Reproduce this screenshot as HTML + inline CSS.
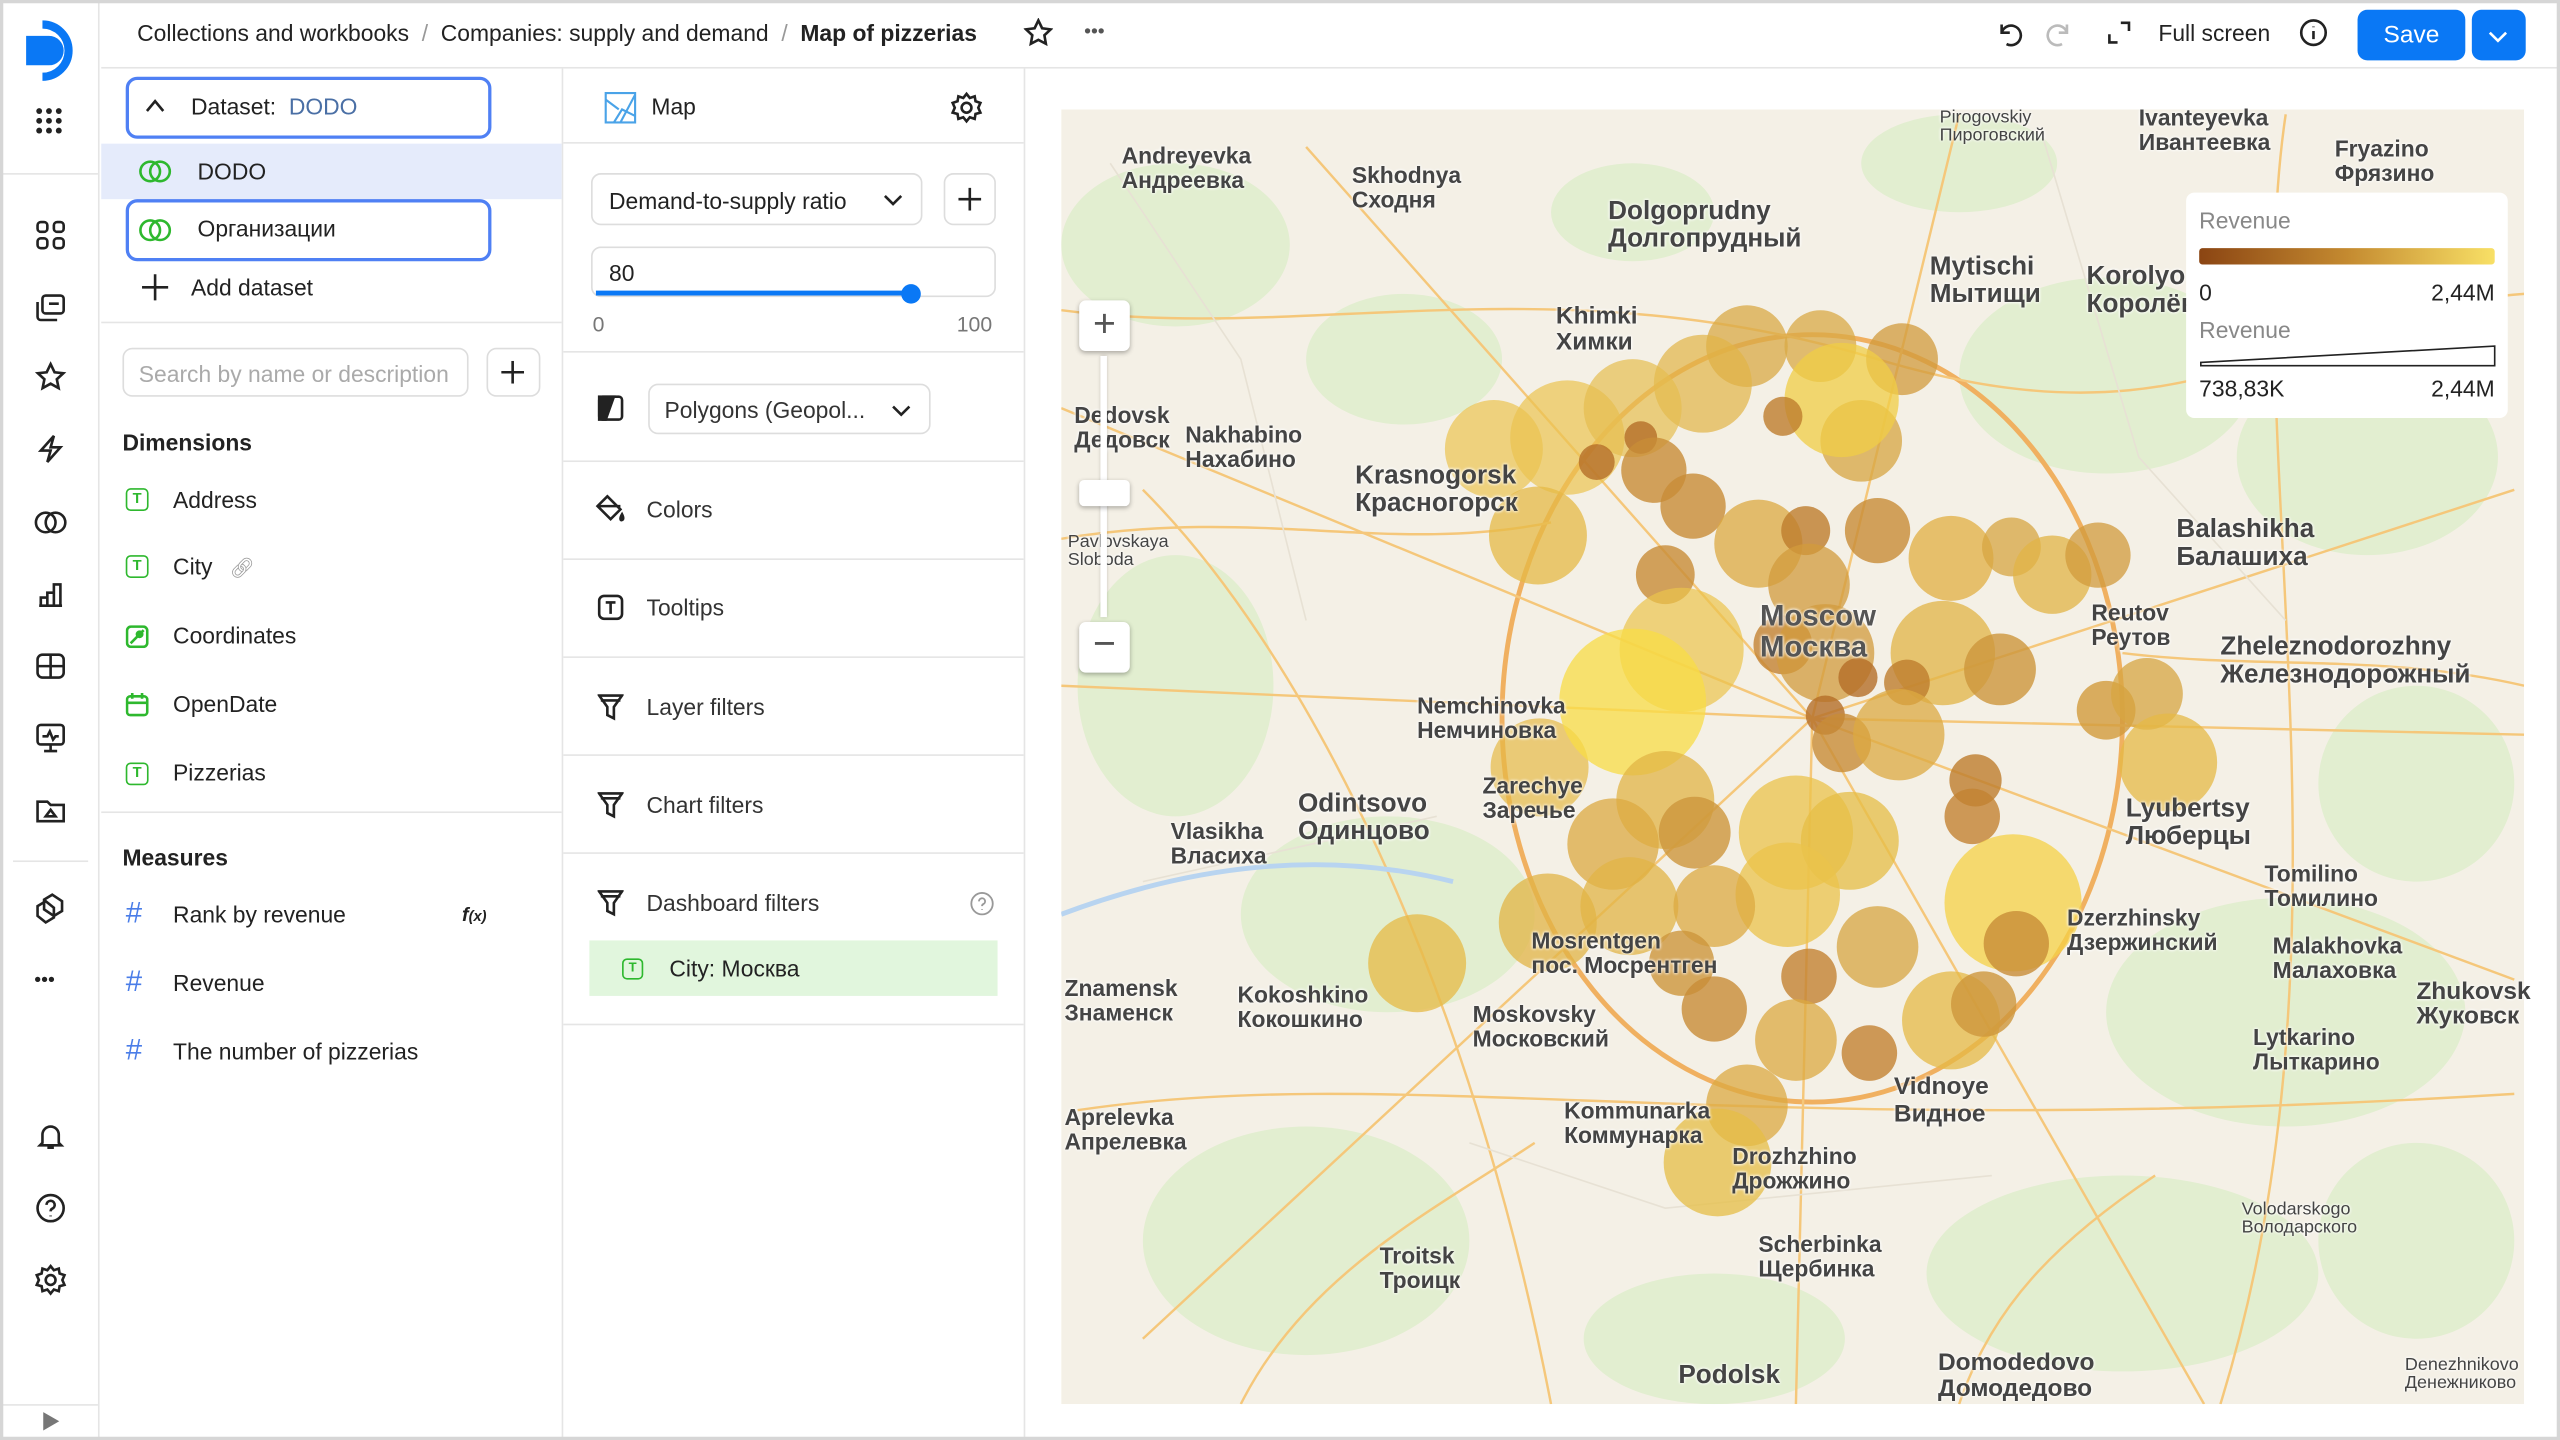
<!DOCTYPE html>
<html><head><meta charset="utf-8">
<style>
*{box-sizing:border-box;margin:0;padding:0}
html,body{width:2560px;height:1440px;overflow:hidden;background:#fff}
#w{position:absolute;left:0;top:0;width:1568px;height:882px;transform:scale(1.632653);transform-origin:0 0;font-family:"Liberation Sans","Noto Sans CJK SC",sans-serif;color:#222;font-size:14px;overflow:hidden}
#fr{position:absolute;left:0;top:0;width:1568px;height:882px;border:2px solid #d6d6d6;pointer-events:none;z-index:10}
.a{position:absolute}
.ic{position:absolute;stroke:#222;fill:none;stroke-width:1.6}
.sep{position:absolute;height:1px;background:#e5e5e5}
.t{position:absolute;width:14px;height:14px;border:1.6px solid #2eb82e;border-radius:3px;color:#2eb82e;font-size:9px;font-weight:bold;text-align:center;line-height:11px}
.hash{position:absolute;color:#4a7de8;font-size:18px}
.sec{position:absolute;left:396px;font-size:14px;color:#333}
.lbl{position:absolute;font-family:"Liberation Sans",sans-serif;font-weight:bold;color:#444;font-size:14px;line-height:15px;text-shadow:0 0 2px #fff,0 0 2px #fff}
.sm{font-size:11px;font-weight:normal;line-height:11px}
</style></head><body><div id="w">
<div id="fr"></div>
<!-- top bar -->
<div class="sep" style="left:62px;top:41px;width:1506px"></div>
<div class="a" style="left:84px;top:12px;font-size:14px">Collections and workbooks <span style="color:#999">&nbsp;/&nbsp;</span> Companies: supply and demand <span style="color:#999">&nbsp;/&nbsp;</span> <b style="font-weight:600">Map of pizzerias</b></div>
<svg class="ic" style="left:627px;top:11px" width="18" height="18" viewBox="0 0 18 18"><path d="M9 1.5l2.3 4.8 5.2.7-3.8 3.6.9 5.2L9 13.4l-4.6 2.4.9-5.2L1.5 7l5.2-.7z"/></svg>
<div class="a" style="left:664px;top:12px;font-size:12px;letter-spacing:0px;color:#555">•••</div>
<svg class="ic" style="left:1222px;top:12px" width="18" height="18" viewBox="0 0 18 18"><path d="M4 3v5h5M4 8a6 6 0 1 1 3 7"/></svg>
<svg class="ic" style="left:1252px;top:12px;stroke:#bbb" width="18" height="18" viewBox="0 0 18 18"><path d="M14 3v5H9M14 8a6 6 0 1 0-3 7"/></svg>
<svg class="ic" style="left:1290px;top:12px" width="16" height="16" viewBox="0 0 16 16"><path d="M2 9v5h5M9 2h5v5"/></svg>
<div class="a" style="left:1322px;top:12px">Full screen</div>
<svg class="ic" style="left:1408px;top:11px" width="18" height="18" viewBox="0 0 18 18"><circle cx="9" cy="9" r="7.5"/><path d="M9 8v5M9 5.2v.5"/></svg>
<div class="a" style="left:1444px;top:6px;width:66px;height:31px;background:#0a78f5;border-radius:6px;color:#fff;text-align:center;line-height:31px;font-size:15px">Save</div>
<div class="a" style="left:1514px;top:6px;width:33px;height:31px;background:#0a78f5;border-radius:6px"></div>
<svg class="ic" style="left:1522px;top:14px;stroke:#fff" width="16" height="16" viewBox="0 0 16 16"><path d="M3 6l5 5 5-5"/></svg>
<!-- left nav -->
<div class="sep" style="left:60px;top:0;width:1px;height:882px"></div>
<svg class="a" style="left:12px;top:12px" width="38" height="38" viewBox="0 0 38 38"><path d="M4 10h14a9 9 0 0 1 0 18H4z" fill="#0a78f5"/><path d="M14 3a16 16 0 0 1 0 32" fill="none" stroke="#0a78f5" stroke-width="5"/></svg>
<svg class="a" style="left:22px;top:66px" width="16" height="16" viewBox="0 0 16 16" fill="#222"><circle cx="2" cy="2" r="1.8"/><circle cx="8" cy="2" r="1.8"/><circle cx="14" cy="2" r="1.8"/><circle cx="2" cy="8" r="1.8"/><circle cx="8" cy="8" r="1.8"/><circle cx="14" cy="8" r="1.8"/><circle cx="2" cy="14" r="1.8"/><circle cx="8" cy="14" r="1.8"/><circle cx="14" cy="14" r="1.8"/></svg>
<div class="sep" style="left:0;top:106px;width:60px"></div>
<svg class="ic" style="left:21px;top:134px" width="20" height="20" viewBox="0 0 20 20"><rect x="2" y="2" width="6" height="6" rx="2"/><rect x="12" y="2" width="6" height="6" rx="2"/><rect x="2" y="12" width="6" height="6" rx="2"/><rect x="12" y="12" width="6" height="6" rx="2"/></svg>
<svg class="ic" style="left:21px;top:178px" width="20" height="20" viewBox="0 0 20 20"><rect x="5" y="3" width="13" height="11" rx="2"/><path d="M2 7v9a2 2 0 0 0 2 2h10M9 8h6"/></svg>
<svg class="ic" style="left:21px;top:221px" width="20" height="20" viewBox="0 0 20 20"><path d="M10 2l2.4 5 5.4.6-4 3.7 1.1 5.4L10 14l-4.9 2.7 1.1-5.4-4-3.7 5.4-.6z"/></svg>
<svg class="ic" style="left:21px;top:265px" width="20" height="20" viewBox="0 0 20 20"><path d="M12 2L4 11h6l-2 7 8-9h-6z"/></svg>
<svg class="ic" style="left:20px;top:310px" width="22" height="20" viewBox="0 0 22 20"><circle cx="8" cy="10" r="6"/><circle cx="14" cy="10" r="6"/></svg>
<svg class="ic" style="left:21px;top:354px" width="20" height="20" viewBox="0 0 20 20"><path d="M3 17h14M4 17v-5h4v5M8 17V9h4v8M12 17V4h4v13"/></svg>
<svg class="ic" style="left:21px;top:398px" width="20" height="20" viewBox="0 0 20 20"><rect x="2" y="3" width="16" height="14" rx="3"/><path d="M2 10h16M10 3v14"/></svg>
<svg class="ic" style="left:21px;top:442px" width="20" height="20" viewBox="0 0 20 20"><rect x="2" y="2" width="16" height="12" rx="2"/><path d="M5 9h3l1.5-3 2 5 1.5-2h2M10 14v4M6 18h8"/></svg>
<svg class="ic" style="left:21px;top:486px" width="20" height="20" viewBox="0 0 20 20"><path d="M2 5h6l2 2h8v10H2z"/><path d="M7 14h6l-3-4z"/></svg>
<div class="sep" style="left:8px;top:527px;width:46px"></div>
<svg class="ic" style="left:21px;top:546px" width="20" height="20" viewBox="0 0 20 20"><path d="M6 5l5-3 6 4v6l-5 3-6-4z"/><path d="M2 9l5-3 5 4v6l-5 3-5-4z"/></svg>
<div class="a" style="left:21px;top:593px;font-size:12px;color:#222">•••</div>
<svg class="ic" style="left:21px;top:686px" width="20" height="20" viewBox="0 0 20 20"><path d="M5 14V9a5 5 0 0 1 10 0v5l1.5 1.5h-13zM8 17h4"/></svg>
<svg class="ic" style="left:21px;top:730px" width="20" height="20" viewBox="0 0 20 20"><circle cx="10" cy="10" r="8"/><path d="M7.5 8a2.5 2.5 0 1 1 3.5 2.3c-.8.4-1 .9-1 1.7M10 14.5v.5"/></svg>
<svg class="ic" style="left:21px;top:774px" width="20" height="20" viewBox="0 0 20 20"><circle cx="10" cy="10" r="3"/><path d="M10 1.5l2 2.5 3-1 .5 3 3 1-1.3 3 1.3 3-3 .8-.5 3-3-1-2 2.5-2-2.5-3 1-.5-3-3-.8L2.8 10 1.5 7l3-1 .5-3 3 1z"/></svg>
<div class="sep" style="left:0;top:860px;width:60px"></div>
<div class="a" style="left:25px;top:862px;color:#777;font-size:12px">▶</div>
<!-- datasets panel -->
<div class="sep" style="left:344px;top:42px;width:1px;height:840px"></div>
<div class="a" style="left:77px;top:47px;width:224px;height:38px;border:2.5px solid #4f80f4;border-radius:7px"></div>
<svg class="ic" style="left:88px;top:58px" width="14" height="14" viewBox="0 0 14 14"><path d="M2 10l5-6 5 6"/></svg>
<div class="a" style="left:117px;top:57px">Dataset:&nbsp;&nbsp;<span style="color:#4a6fa5">DODO</span></div>
<div class="a" style="left:62px;top:88px;width:282px;height:34px;background:#e5ebfb"></div>
<svg class="ic" style="left:84px;top:97px;stroke:#2eb82e" width="22" height="16" viewBox="0 0 22 16"><circle cx="8" cy="8" r="6"/><circle cx="14" cy="8" r="6"/></svg>
<div class="a" style="left:121px;top:97px">DODO</div>
<div class="a" style="left:77px;top:122px;width:224px;height:38px;border:2.5px solid #4f80f4;border-radius:7px"></div>
<svg class="ic" style="left:84px;top:133px;stroke:#2eb82e" width="22" height="16" viewBox="0 0 22 16"><circle cx="8" cy="8" r="6"/><circle cx="14" cy="8" r="6"/></svg>
<div class="a" style="left:121px;top:132px">Организации</div>
<svg class="ic" style="left:86px;top:167px" width="18" height="18" viewBox="0 0 18 18"><path d="M9 1v16M1 9h16"/></svg>
<div class="a" style="left:117px;top:168px">Add dataset</div>
<div class="sep" style="left:62px;top:197px;width:282px"></div>
<div class="a" style="left:75px;top:213px;width:212px;height:30px;border:1px solid #ddd;border-radius:6px;color:#aaa;padding:7px 9px">Search by name or description</div>
<div class="a" style="left:298px;top:213px;width:33px;height:30px;border:1px solid #ddd;border-radius:6px"></div>
<svg class="ic" style="left:307px;top:221px" width="14" height="14" viewBox="0 0 14 14"><path d="M7 0v14M0 7h14"/></svg>
<div class="a" style="left:75px;top:263px;font-weight:bold">Dimensions</div>
<div class="t" style="left:77px;top:299px">T</div><div class="a" style="left:106px;top:298px">Address</div>
<div class="t" style="left:77px;top:340px">T</div><div class="a" style="left:106px;top:339px">City <span style="color:#999;font-size:12px">&nbsp;&nbsp;🔗︎</span></div>
<svg class="a" style="left:77px;top:383px" width="14" height="14" viewBox="0 0 14 14"><rect x="0.8" y="0.8" width="12.4" height="12.4" rx="2.5" fill="none" stroke="#2eb82e" stroke-width="1.6"/><path d="M3 11l8-8" stroke="#2eb82e" stroke-width="1.6"/><circle cx="8.5" cy="5.5" r="2.4" fill="#2eb82e"/></svg>
<div class="a" style="left:106px;top:381px">Coordinates</div>
<svg class="a" style="left:77px;top:424px" width="14" height="15" viewBox="0 0 14 15" fill="none" stroke="#2eb82e" stroke-width="1.6"><rect x="0.8" y="2.5" width="12.4" height="11.5" rx="2"/><path d="M1 6.5h12M4 0.5v3.5M10 0.5v3.5"/></svg>
<div class="a" style="left:106px;top:423px">OpenDate</div>
<div class="t" style="left:77px;top:467px">T</div><div class="a" style="left:106px;top:465px">Pizzerias</div>
<div class="sep" style="left:62px;top:497px;width:282px"></div>
<div class="a" style="left:75px;top:517px;font-weight:bold">Measures</div>
<div class="hash" style="left:77px;top:549px">#</div><div class="a" style="left:106px;top:552px">Rank by revenue</div><div class="a" style="left:283px;top:553px;font-size:12px;font-style:italic;font-weight:bold">f<span style="font-size:9px">(x)</span></div>
<div class="hash" style="left:77px;top:591px">#</div><div class="a" style="left:106px;top:594px">Revenue</div>
<div class="hash" style="left:77px;top:633px">#</div><div class="a" style="left:106px;top:636px">The number of pizzerias</div>
<!-- config panel -->
<div class="sep" style="left:627px;top:42px;width:1px;height:840px"></div>
<svg class="a" style="left:370px;top:56px" width="20" height="20" viewBox="0 0 20 20" fill="none" stroke="#4aa3e8" stroke-width="1.3"><rect x="1" y="1" width="18" height="18"/><path d="M1 5l8 6M19 2l-9 17M6 19l5-8 8 4"/></svg>
<div class="a" style="left:399px;top:57px">Map</div>
<svg class="ic" style="left:582px;top:56px" width="20" height="20" viewBox="0 0 20 20"><circle cx="10" cy="10" r="3"/><path d="M10 1.5l2 2.5 3-1 .5 3 3 1-1.3 3 1.3 3-3 .8-.5 3-3-1-2 2.5-2-2.5-3 1-.5-3-3-.8L2.8 10 1.5 7l3-1 .5-3 3 1z"/></svg>
<div class="sep" style="left:345px;top:87px;width:282px"></div>
<div class="a" style="left:362px;top:106px;width:203px;height:32px;border:1px solid #ddd;border-radius:6px;padding:8px 10px">Demand-to-supply ratio</div>
<svg class="ic" style="left:540px;top:115px" width="14" height="14" viewBox="0 0 14 14"><path d="M2 5l5 5 5-5"/></svg>
<div class="a" style="left:578px;top:106px;width:32px;height:32px;border:1px solid #ddd;border-radius:6px"></div>
<svg class="ic" style="left:587px;top:115px" width="14" height="14" viewBox="0 0 14 14"><path d="M7 0v14M0 7h14"/></svg>
<div class="a" style="left:362px;top:151px;width:248px;height:31px;border:1px solid #ddd;border-radius:6px;padding:7px 10px">80</div>
<div class="a" style="left:365px;top:178px;width:193px;height:3px;background:#0a78f5"></div>
<div class="a" style="left:552px;top:174px;width:12px;height:12px;border-radius:6px;background:#0a78f5"></div>
<div class="a" style="left:363px;top:191px;color:#777;font-size:13px">0</div>
<div class="a" style="left:586px;top:191px;color:#777;font-size:13px">100</div>
<div class="sep" style="left:345px;top:215px;width:282px"></div>
<svg class="ic" style="left:366px;top:242px" width="16" height="16" viewBox="0 0 16 16"><rect x="1" y="1" width="14" height="14" rx="2"/><path d="M1 1h9l-5 14H1z" fill="#222"/></svg>
<div class="a" style="left:397px;top:235px;width:173px;height:31px;border:1px solid #ddd;border-radius:6px;padding:7px 9px;color:#333">Polygons (Geopol...</div>
<svg class="ic" style="left:545px;top:244px" width="14" height="14" viewBox="0 0 14 14"><path d="M2 5l5 5 5-5"/></svg>
<div class="sep" style="left:345px;top:282px;width:282px"></div>
<svg class="ic" style="left:364px;top:302px" width="20" height="20" viewBox="0 0 20 20"><path d="M8 2l8 8-6 6-8-8z"/><path d="M2 8h14" /><path d="M17 13c1 2 1 3 0 3.5s-1.5-1-0-3.5z" fill="#222"/></svg>
<div class="sec" style="top:304px">Colors</div>
<div class="sep" style="left:345px;top:342px;width:282px"></div>
<svg class="ic" style="left:366px;top:364px" width="16" height="16" viewBox="0 0 16 16"><rect x="1" y="1" width="14" height="14" rx="3"/><path d="M5 5h6M8 5v7"/></svg>
<div class="sec" style="top:364px">Tooltips</div>
<div class="sep" style="left:345px;top:402px;width:282px"></div>
<svg class="ic" style="left:366px;top:424px" width="16" height="18" viewBox="0 0 16 18"><path d="M1 2h14l-5 7v7l-4-2V9z"/><path d="M2 5h12"/></svg>
<div class="sec" style="top:425px">Layer filters</div>
<div class="sep" style="left:345px;top:462px;width:282px"></div>
<svg class="ic" style="left:366px;top:484px" width="16" height="18" viewBox="0 0 16 18"><path d="M1 2h14l-5 7v7l-4-2V9z"/><path d="M2 5h12"/></svg>
<div class="sec" style="top:485px">Chart filters</div>
<div class="sep" style="left:345px;top:522px;width:282px"></div>
<svg class="ic" style="left:366px;top:544px" width="16" height="18" viewBox="0 0 16 18"><path d="M1 2h14l-5 7v7l-4-2V9z"/><path d="M2 5h12"/></svg>
<div class="sec" style="top:545px">Dashboard filters</div>
<svg class="ic" style="left:594px;top:546px;stroke:#999;stroke-width:1.2" width="15" height="15" viewBox="0 0 16 16"><circle cx="8" cy="8" r="7"/><path d="M6 6.5a2 2 0 1 1 2.8 1.8c-.6.3-.8.7-.8 1.3M8 11.5v.5"/></svg>
<div class="a" style="left:361px;top:576px;width:250px;height:34px;background:#e1f6dd"></div>
<div class="t" style="left:381px;top:587px;width:13px;height:13px;font-size:8px;line-height:10px">T</div>
<div class="a" style="left:410px;top:585px">City: Москва</div>
<div class="sep" style="left:345px;top:627px;width:282px"></div>
<!-- map -->
<svg class="a" style="left:650px;top:67px" width="896" height="793" viewBox="650 67 896 793">
<rect x="650" y="67" width="896" height="793" fill="#f4f0e6"/>
<g fill="#e2eed0">
<ellipse cx="720" cy="150" rx="70" ry="50"/><ellipse cx="860" cy="220" rx="60" ry="40"/><ellipse cx="1290" cy="230" rx="90" ry="60"/>
<ellipse cx="1450" cy="280" rx="80" ry="60"/><ellipse cx="720" cy="420" rx="60" ry="80"/><ellipse cx="850" cy="560" rx="90" ry="60"/>
<ellipse cx="1400" cy="620" rx="110" ry="70"/><ellipse cx="800" cy="760" rx="100" ry="70"/><ellipse cx="1300" cy="780" rx="120" ry="60"/>
<ellipse cx="1480" cy="480" rx="60" ry="60"/><ellipse cx="1050" cy="820" rx="80" ry="40"/><ellipse cx="1200" cy="100" rx="60" ry="30"/>
<ellipse cx="1000" cy="130" rx="50" ry="30"/><ellipse cx="1480" cy="760" rx="60" ry="60"/>
</g>
<g fill="none" stroke="#f5c77a" stroke-width="1.5">
<ellipse cx="1110" cy="440" rx="190" ry="235" stroke="#f0b060" stroke-width="3"/>
<path d="M1110 440L1200 70M1110 440L1540 300M1110 440L1540 600M1110 440L1350 860M1110 440L1100 860M1110 440L700 820M1110 440L650 420M1110 440L800 90M1110 440L650 250M1110 440L1546 450"/>
<path d="M650 190c150 20 300 -30 500 30s250 -30 396 -40M660 680c200 -30 400 20 880 -10M700 300c100 100 200 300 250 560M1400 70c-30 200 50 500 -40 790M650 330c120 -20 200 10 300 -10M1300 400c80 10 160 0 246 20M760 860c40-80 120-120 180-160M1200 860c20-60 60-100 120-140"/>
</g>
<g fill="none" stroke="#e7e1d4" stroke-width="1">
<path d="M680 100l80 120 40 160M1250 80l60 200 90 100M900 700l120 40 200-20M700 540l180-40"/>
</g>
<path d="M650 560c80-30 160-40 240-20" fill="none" stroke="#b8d4f0" stroke-width="3"/>
<g>
<circle cx="1070" cy="212" r="25" fill="rgba(218,170,70,.75)"/><circle cx="1115" cy="212" r="22" fill="rgba(218,170,70,.75)"/>
<circle cx="1165" cy="220" r="22" fill="rgba(210,155,60,.75)"/><circle cx="1043" cy="235" r="30" fill="rgba(225,180,70,.7)"/>
<circle cx="915" cy="275" r="30" fill="rgba(235,195,80,.7)"/><circle cx="960" cy="268" r="35" fill="rgba(235,195,80,.7)"/>
<circle cx="1000" cy="250" r="30" fill="rgba(230,190,80,.7)"/><circle cx="1140" cy="270" r="25" fill="rgba(215,165,65,.75)"/>
<circle cx="1128" cy="245" r="35" fill="rgba(240,205,70,.75)"/>
<circle cx="1005" cy="268" r="10" fill="rgba(180,110,40,.8)"/><circle cx="978" cy="283" r="11" fill="rgba(180,110,40,.8)"/>
<circle cx="1013" cy="288" r="20" fill="rgba(200,140,55,.8)"/><circle cx="1092" cy="255" r="12" fill="rgba(190,125,45,.8)"/>
<circle cx="1037" cy="310" r="20" fill="rgba(200,140,55,.8)"/><circle cx="942" cy="328" r="30" fill="rgba(230,185,70,.75)"/>
<circle cx="1077" cy="333" r="27" fill="rgba(220,170,65,.75)"/><circle cx="1150" cy="325" r="20" fill="rgba(200,140,55,.8)"/>
<circle cx="1106" cy="325" r="15" fill="rgba(190,125,45,.8)"/><circle cx="1020" cy="352" r="18" fill="rgba(200,140,55,.8)"/>
<circle cx="1195" cy="342" r="26" fill="rgba(225,175,65,.75)"/><circle cx="1232" cy="335" r="18" fill="rgba(215,165,65,.75)"/>
<circle cx="1257" cy="352" r="24" fill="rgba(225,180,70,.75)"/><circle cx="1285" cy="340" r="20" fill="rgba(210,155,60,.75)"/>
<circle cx="1108" cy="358" r="25" fill="rgba(210,155,60,.75)"/><circle cx="1030" cy="398" r="38" fill="rgba(235,195,75,.7)"/>
<circle cx="1092" cy="395" r="18" fill="rgba(195,130,50,.8)"/><circle cx="1118" cy="400" r="30" fill="rgba(210,155,60,.75)"/>
<circle cx="1190" cy="400" r="32" fill="rgba(225,180,70,.75)"/><circle cx="1225" cy="410" r="22" fill="rgba(205,150,60,.8)"/>
<circle cx="943" cy="470" r="30" fill="rgba(230,185,70,.7)"/><circle cx="1000" cy="430" r="45" fill="rgba(248,220,70,.75)"/>
<circle cx="1138" cy="415" r="12" fill="rgba(180,110,40,.8)"/><circle cx="1118" cy="438" r="12" fill="rgba(180,110,40,.8)"/>
<circle cx="1168" cy="418" r="14" fill="rgba(190,125,45,.8)"/><circle cx="1128" cy="455" r="18" fill="rgba(200,140,55,.8)"/>
<circle cx="1163" cy="450" r="28" fill="rgba(220,170,65,.75)"/><circle cx="1290" cy="435" r="18" fill="rgba(210,155,60,.8)"/>
<circle cx="1315" cy="425" r="22" fill="rgba(215,165,65,.75)"/><circle cx="1328" cy="467" r="30" fill="rgba(230,185,70,.75)"/>
<circle cx="1020" cy="490" r="30" fill="rgba(225,180,70,.75)"/><circle cx="1100" cy="510" r="35" fill="rgba(235,195,75,.75)"/>
<circle cx="1210" cy="478" r="16" fill="rgba(190,125,45,.8)"/><circle cx="1208" cy="500" r="17" fill="rgba(195,130,50,.8)"/>
<circle cx="988" cy="517" r="28" fill="rgba(220,170,65,.75)"/><circle cx="1038" cy="510" r="22" fill="rgba(205,150,60,.8)"/>
<circle cx="1133" cy="515" r="30" fill="rgba(230,190,70,.75)"/><circle cx="1233" cy="553" r="42" fill="rgba(245,210,70,.75)"/>
<circle cx="1095" cy="548" r="32" fill="rgba(235,195,75,.75)"/><circle cx="948" cy="565" r="30" fill="rgba(225,180,70,.75)"/>
<circle cx="998" cy="555" r="30" fill="rgba(225,180,70,.75)"/><circle cx="1050" cy="555" r="25" fill="rgba(220,170,65,.75)"/>
<circle cx="1150" cy="580" r="25" fill="rgba(215,165,65,.75)"/><circle cx="1235" cy="578" r="20" fill="rgba(200,140,55,.8)"/>
<circle cx="868" cy="590" r="30" fill="rgba(230,185,70,.75)"/><circle cx="1030" cy="590" r="20" fill="rgba(205,150,60,.8)"/>
<circle cx="1108" cy="598" r="17" fill="rgba(195,130,50,.8)"/><circle cx="1050" cy="618" r="20" fill="rgba(200,140,55,.8)"/>
<circle cx="1195" cy="625" r="30" fill="rgba(230,185,70,.75)"/><circle cx="1215" cy="615" r="20" fill="rgba(205,150,60,.8)"/>
<circle cx="1145" cy="645" r="17" fill="rgba(195,130,50,.8)"/><circle cx="1100" cy="637" r="25" fill="rgba(220,170,65,.75)"/>
<circle cx="1070" cy="677" r="25" fill="rgba(220,170,65,.75)"/><circle cx="1052" cy="712" r="33" fill="rgba(230,190,70,.75)"/>
</g>
</svg>
<div class="lbl" style="left:687px;top:88px">Andreyevka<br>Андреевка</div>
<div class="lbl" style="left:828px;top:100px">Skhodnya<br>Сходня</div>
<div class="lbl" style="left:985px;top:121px;font-size:16px;line-height:17px">Dolgoprudny<br>Долгопрудный</div>
<div class="lbl" style="left:1182px;top:155px;font-size:16px;line-height:17px">Mytischi<br>Мытищи</div>
<div class="lbl" style="left:1278px;top:161px;font-size:16px;line-height:17px">Korolyo<br>Королёв</div>
<div class="lbl sm" style="left:1188px;top:67px">Pirogovskiy<br>Пироговский</div>
<div class="lbl" style="left:1310px;top:65px">Ivanteyevka<br>Ивантеевка</div>
<div class="lbl" style="left:1430px;top:84px">Fryazino<br>Фрязино</div>
<div class="lbl" style="left:953px;top:186px;font-size:15px;line-height:16px">Khimki<br>Химки</div>
<div class="lbl" style="left:658px;top:247px">Dedovsk<br>Дедовск</div>
<div class="lbl" style="left:726px;top:259px">Nakhabino<br>Нахабино</div>
<div class="lbl" style="left:830px;top:283px;font-size:16px;line-height:17px">Krasnogorsk<br>Красногорск</div>
<div class="lbl sm" style="left:654px;top:327px">Pavlovskaya<br>Sloboda</div>
<div class="lbl" style="left:1333px;top:316px;font-size:16px;line-height:17px">Balashikha<br>Балашиха</div>
<div class="lbl" style="left:1281px;top:368px">Reutov<br>Реутов</div>
<div class="lbl" style="left:1360px;top:388px;font-size:16px;line-height:17px">Zheleznodorozhny<br>Железнодорожный</div>
<div class="lbl" style="left:1078px;top:368px;font-size:18px;line-height:19px;color:#555">Moscow<br>Москва</div>
<div class="lbl" style="left:868px;top:425px">Nemchinovka<br>Немчиновка</div>
<div class="lbl" style="left:795px;top:484px;font-size:16px;line-height:17px">Odintsovo<br>Одинцово</div>
<div class="lbl" style="left:717px;top:502px">Vlasikha<br>Власиха</div>
<div class="lbl" style="left:908px;top:474px">Zarechye<br>Заречье</div>
<div class="lbl" style="left:1302px;top:487px;font-size:16px;line-height:17px">Lyubertsy<br>Люберцы</div>
<div class="lbl" style="left:1387px;top:528px">Tomilino<br>Томилино</div>
<div class="lbl" style="left:1266px;top:555px">Dzerzhinsky<br>Дзержинский</div>
<div class="lbl" style="left:1392px;top:572px">Malakhovka<br>Малаховка</div>
<div class="lbl" style="left:1480px;top:600px;font-size:15px">Zhukovsk<br>Жуковск</div>
<div class="lbl" style="left:652px;top:598px">Znamensk<br>Знаменск</div>
<div class="lbl" style="left:758px;top:602px">Kokoshkino<br>Кокошкино</div>
<div class="lbl" style="left:902px;top:614px">Moskovsky<br>Московский</div>
<div class="lbl" style="left:938px;top:569px">Mosrentgen<br>пос. Мосрентген</div>
<div class="lbl" style="left:1160px;top:657px;font-size:15px;line-height:17px">Vidnoye<br>Видное</div>
<div class="lbl" style="left:1380px;top:628px">Lytkarino<br>Лыткарино</div>
<div class="lbl" style="left:958px;top:673px">Kommunarka<br>Коммунарка</div>
<div class="lbl" style="left:652px;top:677px">Aprelevka<br>Апрелевка</div>
<div class="lbl" style="left:1061px;top:701px">Drozhzhino<br>Дрожжино</div>
<div class="lbl sm" style="left:1373px;top:736px">Volodarskogo<br>Володарского</div>
<div class="lbl" style="left:845px;top:762px">Troitsk<br>Троицк</div>
<div class="lbl" style="left:1077px;top:755px">Scherbinka<br>Щербинка</div>
<div class="lbl" style="left:1028px;top:835px;font-size:16px">Podolsk</div>
<div class="lbl" style="left:1187px;top:827px;font-size:15px;line-height:16px">Domodedovo<br>Домодедово</div>
<div class="lbl sm" style="left:1473px;top:831px">Denezhnikovo<br>Денежниково</div>
<!-- zoom controls -->
<div class="a" style="left:661px;top:184px;width:31px;height:31px;background:#fff;border-radius:4px;box-shadow:0 1px 3px rgba(0,0,0,.3);text-align:center;font-size:24px;line-height:30px;color:#555">+</div>
<div class="a" style="left:674px;top:218px;width:4px;height:160px;background:#fff;box-shadow:0 0 2px rgba(0,0,0,.2)"></div>
<div class="a" style="left:661px;top:294px;width:31px;height:16px;background:#fff;border-radius:3px;box-shadow:0 1px 3px rgba(0,0,0,.3)"></div>
<div class="a" style="left:661px;top:381px;width:31px;height:31px;background:#fff;border-radius:4px;box-shadow:0 1px 3px rgba(0,0,0,.3);text-align:center;font-size:24px;line-height:28px;color:#555">−</div>
<!-- legend -->
<div class="a" style="left:1339px;top:118px;width:197px;height:138px;background:#fff;border-radius:5px">
<div class="a" style="left:8px;top:9px;color:#888;font-size:14px">Revenue</div>
<div class="a" style="left:8px;top:34px;width:181px;height:10px;border-radius:2px;background:linear-gradient(90deg,#8b4513,#c48a30,#f8e066)"></div>
<div class="a" style="left:8px;top:53px;font-size:14px">0</div>
<div class="a" style="right:8px;top:53px;font-size:14px">2,44M</div>
<div class="a" style="left:8px;top:76px;color:#888;font-size:14px">Revenue</div>
<svg class="a" style="left:8px;top:92px" width="182" height="16"><path d="M1 12L181 2V14H1z" fill="none" stroke="#222" stroke-width="1"/></svg>
<div class="a" style="left:8px;top:112px;font-size:14px">738,83K</div>
<div class="a" style="right:8px;top:112px;font-size:14px">2,44M</div>
</div>
</div></body></html>
